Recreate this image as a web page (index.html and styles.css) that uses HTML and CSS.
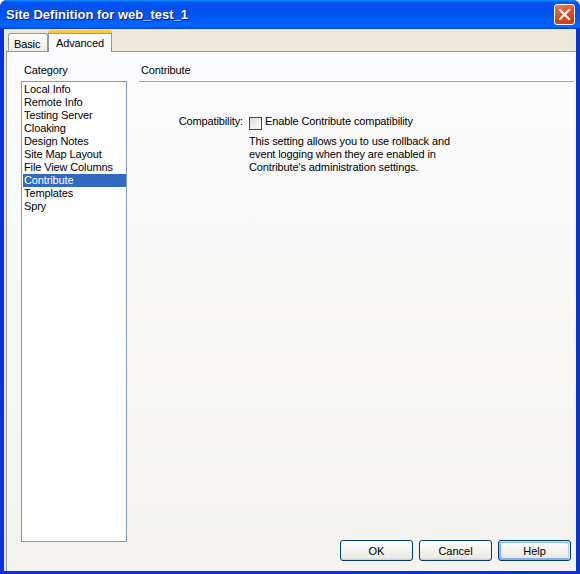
FILE: index.html
```html
<!DOCTYPE html>
<html lang="en">
<head>
    <meta charset="UTF-8">
    <meta name="viewport" content="width=device-width, initial-scale=1.0">
    <title>Site Definition for web_test_1</title>
    <link rel="stylesheet" href="styles.css">
</head>
<body>
    <div class="window">
        <div class="title-bar">
            <span class="title-text">Site Definition for web_test_1</span>
            <button class="close-btn" aria-label="Close">
                <svg width="13" height="13" viewBox="0 0 13 13">
                    <path d="M2 2 L11 11 M11 2 L2 11" stroke="#fff" stroke-width="2.2" stroke-linecap="square"/>
                </svg>
            </button>
        </div>

        <div class="window-body">
            <div class="tabs">
                <div class="tab">Basic</div>
                <div class="tab active">Advanced</div>
            </div>

            <div class="panel">
                <div class="left-col">
                    <div class="col-label">Category</div>
                    <ul class="listbox">
                        <li>Local Info</li>
                        <li>Remote Info</li>
                        <li>Testing Server</li>
                        <li>Cloaking</li>
                        <li>Design Notes</li>
                        <li>Site Map Layout</li>
                        <li>File View Columns</li>
                        <li class="selected">Contribute</li>
                        <li>Templates</li>
                        <li>Spry</li>
                    </ul>
                </div>

                <div class="right-col">
                    <div class="section-title">Contribute</div>

                    <div class="field-row">
                        <div class="field-label">Compatibility:</div>
                        <label class="check">
                            <span class="checkbox"></span>
                            Enable Contribute compatibility
                        </label>
                    </div>
                    <p class="help-text">
                        This setting allows you to use rollback and<br>
                        event logging when they are enabled in<br>
                        Contribute's administration settings.
                    </p>

                    <div class="buttons">
                        <button class="btn">OK</button>
                        <button class="btn">Cancel</button>
                        <button class="btn default">Help</button>
                    </div>
                </div>
            </div>
        </div>
    </div>
</body>
</html>
```

FILE: styles.css
```css
body {
    margin: 0;
    background-color: #fff;
    font-family: "Liberation Sans", Arial, sans-serif;
    font-size: 11px;
    color: #000;
}
.window {
    width: 580px;
    height: 574px;
    display: flex;
    flex-direction: column;
    background-color: #0831d9;
    border-radius: 7px 7px 0 0;
    overflow: hidden;
}
.title-bar {
    height: 29px;
    flex-shrink: 0;
    display: flex;
    align-items: center;
    justify-content: space-between;
    padding: 0 5px 0 6px;
    background: linear-gradient(180deg, #0997ff, #0053ee 8%, #0050ee 40%, #06f 88%, #06f 93%, #005bff 95%, #003dd7 96%, #003dd7);
}
.title-text {
    color: #fff;
    font-weight: bold;
    font-size: 13px;
    text-shadow: 1px 1px #0f1089;
}
.close-btn {
    width: 21px;
    height: 21px;
    padding: 0;
    border: 1px solid #fff;
    border-radius: 3px;
    background: linear-gradient(160deg, #e97c5a, #d6461f 60%, #c33c16);
    display: flex;
    align-items: center;
    justify-content: center;
}
.window-body {
    flex: 1;
    display: flex;
    flex-direction: column;
    margin: 0 4px 3px 4px;
    background-color: #ece9d8;
    letter-spacing: -0.12px;
}
.tabs {
    height: 22px;
    display: flex;
    align-items: flex-end;
    padding-left: 4px;
}
.tab {
    box-sizing: border-box;
    height: 18px;
    padding: 4px 0 0 5px;
    width: 40px;
    border: 1px solid #919b9c;
    border-bottom: none;
    border-radius: 3px 3px 0 0;
    background: linear-gradient(#fff, #ecebe6);
}
.tab.active {
    position: relative;
    z-index: 1;
    height: 22px;
    width: 64px;
    margin-bottom: -1px;
    padding: 4px 0 0 7px;
    background: #fcfcfe;
    border-top: 3px solid #ffc83c;
    box-shadow: inset 0 1px 0 #e68b2c;
}
.panel {
    flex: 1;
    display: flex;
    margin-left: 2px;
    padding: 12px 2px 10px 14px;
    border: 1px solid #919b9c;
    border-bottom: none;
    border-right: none;
    background: linear-gradient(#fcfcfe, #f4f3ee);
    line-height: 13px;
}
.left-col {
    width: 106px;
    flex-shrink: 0;
    margin-right: 12px;
}
.col-label {
    padding-left: 3px;
    margin-bottom: 4px;
}
.listbox {
    box-sizing: border-box;
    height: 461px;
    margin: 0;
    padding: 1px 0 1px 1px;
    list-style: none;
    border: 1px solid #7f9db9;
    background-color: #fff;
}
.listbox li {
    height: 13px;
    padding-left: 1px;
    white-space: nowrap;
}
.listbox li.selected {
    background-color: #316ac5;
    color: #fff;
}
.right-col {
    flex: 1;
    display: flex;
    flex-direction: column;
}
.section-title {
    padding: 0 0 4px 2px;
    border-bottom: 1px solid #aca899;
}
.field-row {
    display: flex;
    margin-top: 33px;
    height: 20px;
}
.field-label {
    width: 104px;
    margin-right: 6px;
    text-align: right;
}
.check {
    display: flex;
    align-items: flex-start;
}
.checkbox {
    box-sizing: border-box;
    width: 13px;
    height: 13px;
    margin: 2px 3px 0 0;
    border: 1px solid #1c5180;
    background: linear-gradient(135deg, #dcdcd7, #fff);
}
.help-text {
    margin: 0 0 0 110px;
}
.buttons {
    margin-top: auto;
    margin-right: 3px;
    display: flex;
    justify-content: flex-end;
    gap: 6px;
}
.btn {
    width: 73px;
    height: 21px;
    padding: 0;
    font-family: "Liberation Sans", Arial, sans-serif;
    font-size: 11px;
    color: #000;
    border: 1px solid #003c74;
    border-radius: 3px;
    background: linear-gradient(180deg, #fff, #ecebe6 86%, #d6d0c5);
}
.btn.default {
    box-shadow: inset -1px 1px #cee7ff, inset 1px 2px #98b8ea, inset -2px 2px #bcd4f6, inset 1px -1px #89ade4, inset 2px -2px #89ade4;
}
```
